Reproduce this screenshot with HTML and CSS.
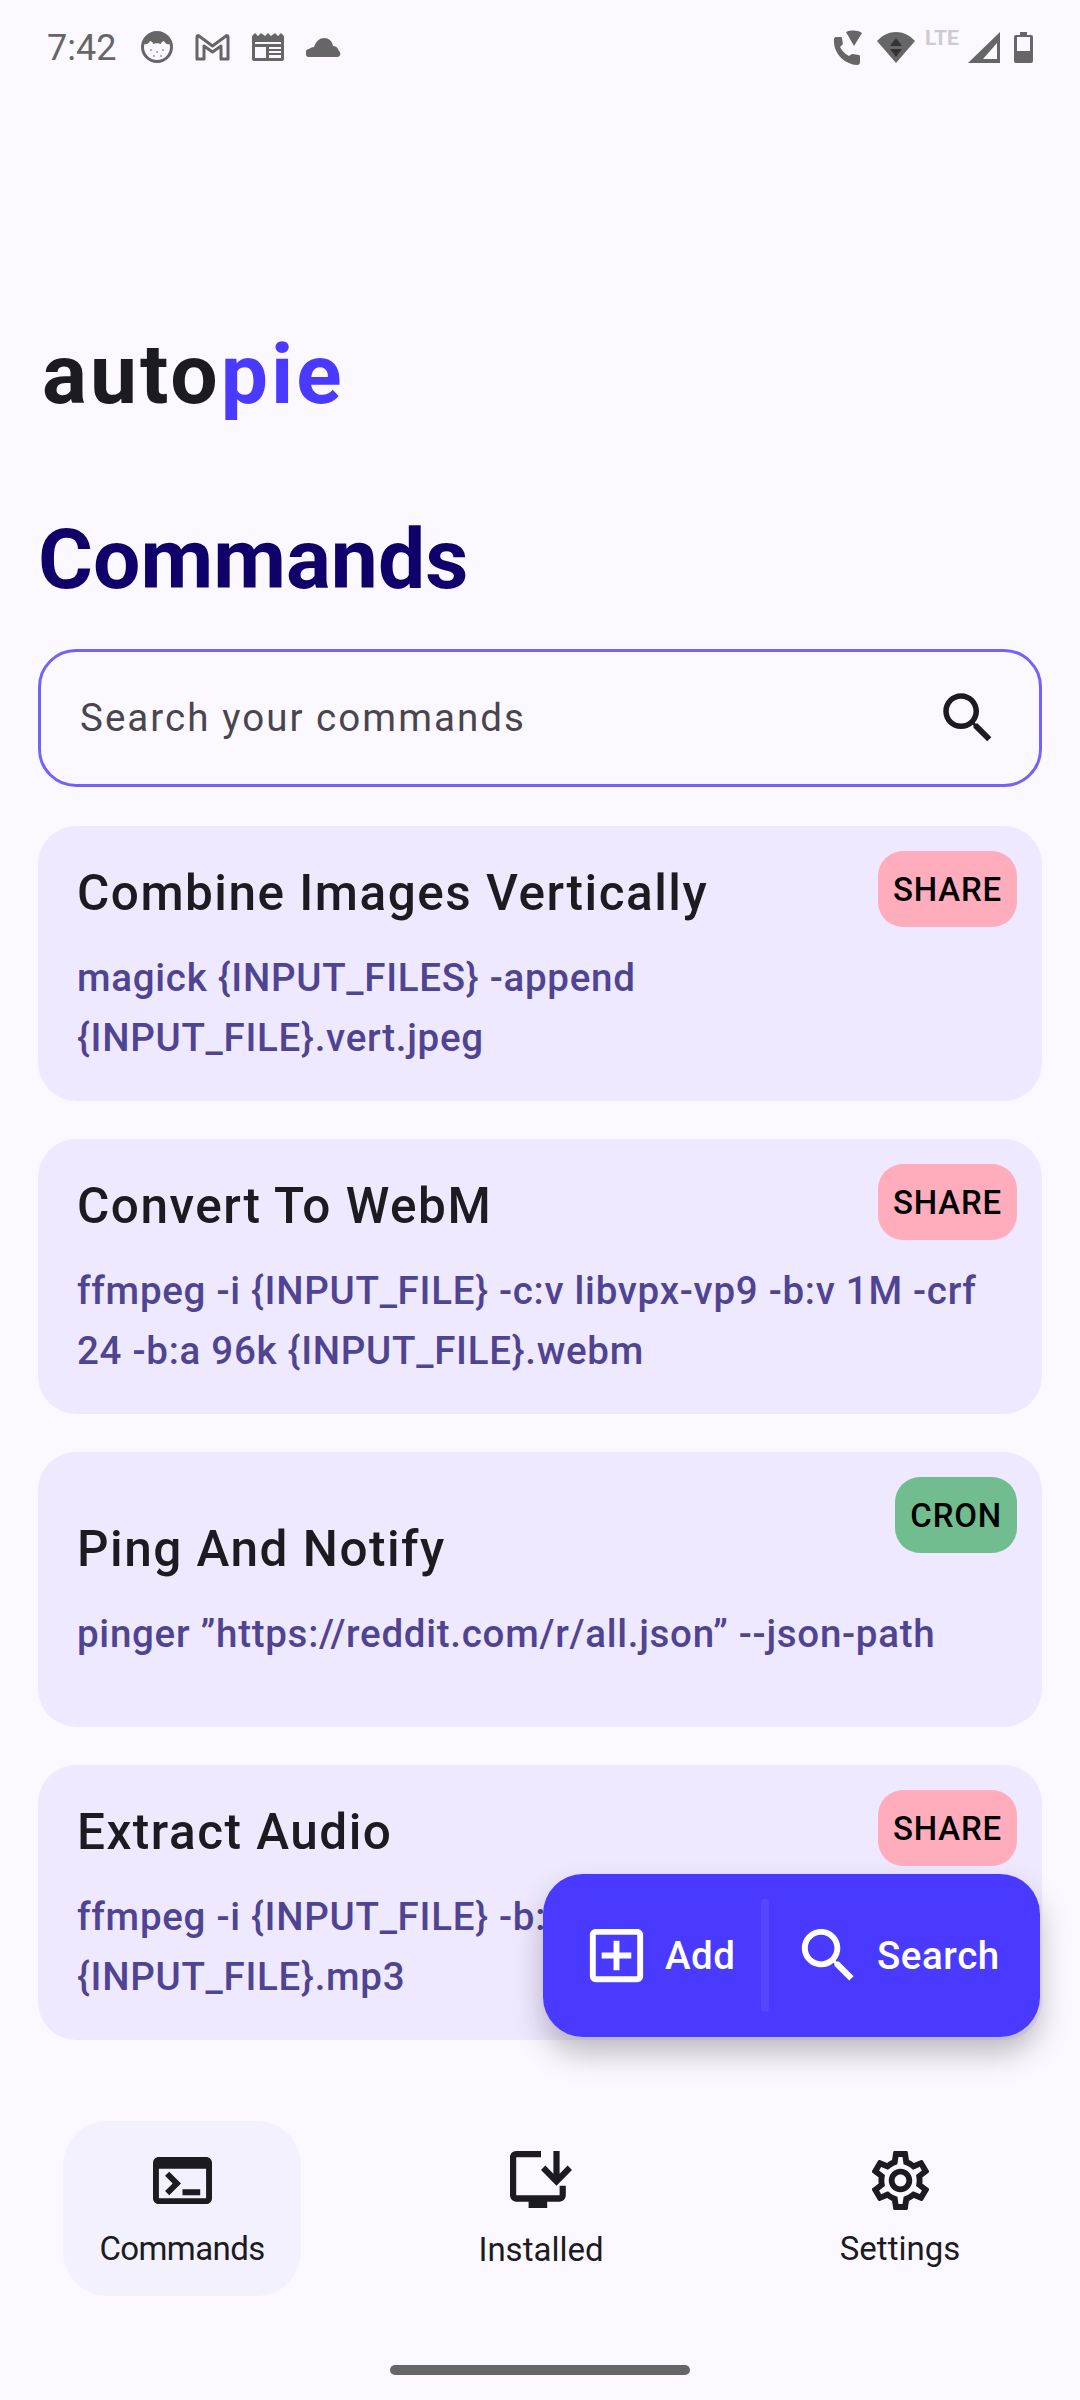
FILE: index.html
```html
<!DOCTYPE html>
<html lang="en">
<head>
  <meta charset="UTF-8">
  <title>autopie</title>
  <link rel="stylesheet" href="styles.css">
</head>
<body>
  <div class="page">

    <!-- Status bar -->
    <div class="status-bar">
      <span class="clock">7:42</span>
      <div class="status-left">
        <svg class="st-face" viewBox="0 0 32 32"><circle cx="16" cy="16" r="14.5" fill="none" stroke="#666" stroke-width="3"/><path d="M3 13C4 6 10 2 16 2s12 4 13 11c-3 1-5-1-6-3-2 1-3 1-3 3-2-1-6-1-8 0 0-2-1-2-3-3-1 2-3 4-6 3z" fill="#666"/><g fill="#999"><circle cx="10" cy="19" r="1"/><circle cx="16" cy="21" r="1"/><circle cx="22" cy="19" r="1"/><circle cx="13" cy="25" r="1"/><circle cx="20" cy="25" r="1"/></g></svg>
        <svg class="st-mail" viewBox="0 0 35 28"><path d="M2 26V4c0-1 1-2 2-1l13.500 10L31 3c1-1 2 0 2 1v22h-7V13l-8.500 6L9 13v13z" fill="none" stroke="#666" stroke-width="3" stroke-linejoin="round"/></svg>
        <svg class="st-news" viewBox="0 0 32 28"><path d="M0 3l3-3 3 3 3-3 4 3 3-3 3 3 4-3 3 3 3-3 3 3v23a2 2 0 0 1-2 2H2a2 2 0 0 1-2-2z" fill="#666"/><path d="M3 9h26v2H3zM3 14h11v11H3zM17 14h12v2H17zM17 18h12v2H17zM17 22h12v3H17z" fill="#fbf8ff"/></svg>
        <svg class="st-cloud" viewBox="0 0 35 20"><path d="M4 20a4 4 0 0 1-1-8c1-1 3-2 5-2 2-6 6-9 10-9 5 0 8 3 9 8 4 0 5 3 6 5 2 1 2 6-2 6z" fill="#666"/></svg>
      </div>
      <div class="status-right">
        <svg class="st-call" viewBox="0 0 29 35"><path d="M13 2c5-2 11-2 16 1l-8 13z" fill="#666"/><path d="M1 9c0-1 1-2 2-2h5c1 0 1 1 1 2l1 5-3 3c2 4 5 7 9 9l3-2 7 1c1 0 1 1 1 2v5c0 2-1 3-3 3C10 34 0 22 1 9z" fill="#666"/></svg>
        <svg class="st-wifi" viewBox="0 0 38 31"><path d="M0 9c11-12 27-12 38 0L19 31z" fill="#666"/><path d="M19 6l6 8H13zM19 25l-6-8h12z" fill="#333"/></svg>
        <span class="st-lte">LTE</span>
        <svg class="st-signal" viewBox="0 0 32 31"><path d="M32 0v31H0z" fill="#666"/><path d="M29 11v16H15z" fill="#fbf8ff"/></svg>
        <svg class="st-battery" viewBox="0 0 19 31"><path d="M6 0h7v3h4a2 2 0 0 1 2 2v24a2 2 0 0 1-2 2H2a2 2 0 0 1-2-2V5a2 2 0 0 1 2-2h4z" fill="#666"/><path d="M3 5h13v14H3z" fill="#fbf8ff"/></svg>
      </div>
    </div>

    <!-- Main content -->
    <div class="brand">auto<span class="brand-accent">pie</span></div>
    <h1 class="title">Commands</h1>

    <div class="search-box">
      <span class="search-hint">Search your commands</span>
      <svg class="icon search-icon" viewBox="0 0 24 24"><path d="M15.500 14h-.79l-.28-.27C15.410 12.590 16 11.110 16 9.500 16 5.910 13.090 3 9.500 3S3 5.910 3 9.500 5.910 16 9.500 16c1.610 0 3.090-.59 4.230-1.570l.27.28v.79l5 4.990L20.490 19l-4.990-5zm-6 0C7.010 14 5 11.990 5 9.500S7.010 5 9.500 5 14 7.010 14 9.500 11.990 14 9.500 14z"/></svg>
    </div>

    <div class="card-list">
      <div class="card">
        <span class="badge badge-share">SHARE</span>
        <div class="card-title">Combine Images Vertically</div>
        <div class="card-cmd">magick {INPUT_FILES} -append {INPUT_FILE}.vert.jpeg</div>
      </div>
      <div class="card">
        <span class="badge badge-share">SHARE</span>
        <div class="card-title">Convert To WebM</div>
        <div class="card-cmd">ffmpeg -i {INPUT_FILE} -c:v libvpx-vp9 -b:v 1M -crf 24 -b:a 96k {INPUT_FILE}.webm</div>
      </div>
      <div class="card">
        <span class="badge badge-cron">CRON</span>
        <div class="card-title">Ping And Notify</div>
        <div class="card-cmd">pinger ”https://reddit.com/r/all.json” --json-path</div>
      </div>
      <div class="card">
        <span class="badge badge-share">SHARE</span>
        <div class="card-title">Extract Audio</div>
        <div class="card-cmd">ffmpeg -i {INPUT_FILE} -b:a 192K -vn -f mp3 {INPUT_FILE}.mp3</div>
      </div>
    </div>

    <!-- Floating add / search button -->
    <div class="fab">
      <div class="fab-part fab-add">
        <svg class="icon" viewBox="0 0 24 24"><path d="M19 3H5c-1.100 0-2 .9-2 2v14c0 1.100.9 2 2 2h14c1.100 0 2-.9 2-2V5c0-1.100-.9-2-2-2zm0 16H5V5h14v14zM11 17h2v-4h4v-2h-4V7h-2v4H7v2h4z"/></svg>
        <span>Add</span>
      </div>
      <div class="fab-divider"></div>
      <div class="fab-part fab-search">
        <svg class="icon" viewBox="0 0 24 24"><path d="M15.500 14h-.79l-.28-.27C15.410 12.590 16 11.110 16 9.500 16 5.910 13.090 3 9.500 3S3 5.910 3 9.500 5.910 16 9.500 16c1.610 0 3.090-.59 4.230-1.570l.27.28v.79l5 4.990L20.490 19l-4.990-5zm-6 0C7.010 14 5 11.990 5 9.500S7.010 5 9.500 5 14 7.010 14 9.500 11.990 14 9.500 14z"/></svg>
        <span>Search</span>
      </div>
    </div>

    <!-- Bottom navigation -->
    <div class="bottom-nav">
      <div class="nav-item nav-item-active">
        <svg class="nav-icon nav-icon-terminal" viewBox="2 4 20 16" preserveAspectRatio="none"><path d="M20 4H4c-1.100 0-2 .9-2 2v12c0 1.100.9 2 2 2h16c1.100 0 2-.9 2-2V6c0-1.100-.9-2-2-2zm0 14H4V8h16v10zm-2-1h-6v-2h6v2zM7.500 17l-1.410-1.410L8.670 13l-2.590-2.590L7.500 9l4 4-4 4z"/></svg>
        <span>Commands</span>
      </div>
      <div class="nav-item">
        <svg class="nav-icon nav-icon-install" viewBox="3 3 20 18" preserveAspectRatio="none"><path d="M19 17H5V5h8V3H5C3.900 3 3 3.890 3 5v12c0 1.100.89 2 2 2h4v2h6v-2h4c1.100 0 2-.9 2-2v-3h-2v3zM18 14l5-5-1.410-1.410L19 10.170V3h-2v7.170l-2.590-2.580L13 9l5 5z"/></svg>
        <span>Installed</span>
      </div>
      <div class="nav-item">
        <svg class="nav-icon nav-icon-gear" viewBox="2.300 2 19.400 20" preserveAspectRatio="none"><path d="M19.430 12.980c.04-.32.07-.64.07-.98 0-.34-.03-.66-.07-.98l2.110-1.650c.19-.15.24-.42.12-.64l-2-3.460c-.09-.16-.26-.25-.44-.25-.06 0-.12.01-.17.03l-2.490 1c-.52-.4-1.080-.73-1.690-.98l-.38-2.650C14.460 2.180 14.250 2 14 2h-4c-.25 0-.46.18-.49.42l-.38 2.650c-.61.25-1.170.59-1.690.98l-2.490-1c-.06-.02-.12-.03-.18-.03-.17 0-.34.09-.43.25l-2 3.460c-.13.22-.07.49.12.64l2.110 1.650c-.04.32-.07.65-.07.98 0 .33.03.66.07.98l-2.110 1.650c-.19.15-.24.42-.12.64l2 3.460c.09.16.26.25.44.25.06 0 .12-.01.17-.03l2.490-1c.52.4 1.080.73 1.690.98l.38 2.650c.03.24.24.42.49.42h4c.25 0 .46-.18.49-.42l.38-2.650c.61-.25 1.170-.59 1.690-.98l2.490 1c.06.02.12.03.18.03.17 0 .34-.09.43-.25l2-3.460c.12-.22.07-.49-.12-.64l-2.110-1.650zm-1.980-1.710c.04.31.05.52.05.73 0 .21-.02.43-.05.73l-.14 1.130.89.7 1.080.84-.7 1.210-1.270-.51-1.040-.42-.9.68c-.43.32-.84.56-1.250.73l-1.060.43-.16 1.130-.2 1.350h-1.400l-.19-1.350-.16-1.130-1.060-.43c-.43-.18-.83-.41-1.230-.71l-.91-.7-1.060.43-1.270.51-.7-1.210 1.080-.84.89-.7-.14-1.130c-.03-.31-.05-.54-.05-.74s.02-.43.05-.73l.14-1.130-.89-.7-1.080-.84.7-1.210 1.270.51 1.040.42.9-.68c.43-.32.84-.56 1.250-.73l1.060-.43.16-1.130.2-1.350h1.390l.19 1.350.16 1.130 1.060.43c.43.18.83.41 1.230.71l.91.7 1.060-.43 1.270-.51.7 1.210-1.070.85-.89.7.14 1.130zM12 8c-2.210 0-4 1.790-4 4s1.790 4 4 4 4-1.790 4-4-1.790-4-4-4zm0 6c-1.100 0-2-.9-2-2s.9-2 2-2 2 .9 2 2-.9 2-2 2z"/></svg>
        <span>Settings</span>
      </div>
    </div>

    <div class="home-bar"></div>
  </div>
</body>
</html>
```

FILE: styles.css
```css
html, body {
  margin: 0;
  padding: 0;
  background: #fbf8ff;
  font-family: 'Roboto', sans-serif;
  color: #1c1b1f;
}

.page {
  position: relative;
  width: 1080px;
  height: 2400px;
  overflow: hidden;
  display: flex;
  flex-direction: column;
}

/* Status bar */
.status-bar {
  height: 62px;
  padding: 0 47px;
  display: flex;
  align-items: center;
  margin-top: 16px;
  color: #666;
  box-sizing: border-box;
}

.clock {
  font-size: 36px;
  width: 94px;
  padding-top: 2px;
}

.status-left {
  display: flex;
  align-items: center;
  gap: 22px;
}

.status-right {
  display: flex;
  align-items: center;
  margin-left: auto;
}

.st-face { width: 32px; height: 32px; }
.st-mail { width: 35px; height: 28px; }
.st-news { width: 32px; height: 28px; }
.st-cloud { width: 35px; height: 20px; }
.st-call { width: 29px; height: 35px; }
.st-wifi { width: 38px; height: 31px; margin-left: 15px; }
.st-signal { width: 32px; height: 31px; margin-left: 5px; }
.st-battery { width: 19px; height: 31px; margin-left: 14px; }

.st-lte {
  font-size: 21px;
  font-weight: 700;
  color: #ccc;
  width: 38px;
  margin-left: 10px;
  margin-bottom: 18px;
}

/* Header */
.brand {
  margin: 247px 0 0 42px;
  font-size: 84px;
  line-height: 100px;
  font-weight: 700;
  letter-spacing: 3px;
}

.brand-accent {
  color: #4a3aff;
}

.title {
  margin: 85px 0 0 38px;
  font-size: 84px;
  line-height: 100px;
  font-weight: 700;
  color: #10006a;
}

/* Search */
.search-box {
  margin: 39px 38px 0;
  height: 138px;
  padding: 0 38px 0 39px;
  display: flex;
  align-items: center;
  justify-content: space-between;
  border: 3px solid #7462f8;
  border-radius: 38px;
  box-sizing: border-box;
}

.search-hint {
  font-size: 38.500px;
  letter-spacing: 2.050px;
  color: #49454f;
  margin-top: -2px;
}

.icon {
  width: 71px;
  height: 71px;
  fill: #fff;
  flex-shrink: 0;
}

.search-icon {
  fill: #1c1b1f;
  width: 66px;
  height: 66px;
}

/* Cards */
.card-list {
  margin: 39px 38px 0;
  display: flex;
  flex-direction: column;
  gap: 38px;
}

.card {
  position: relative;
  height: 275px;
  padding: 0 39px;
  display: flex;
  flex-direction: column;
  justify-content: center;
  background: #efe9ff;
  border-radius: 38px;
  box-sizing: border-box;
}

.card-title {
  font-size: 49.500px;
  line-height: 66px;
  font-weight: 500;
  letter-spacing: 1.500px;
  margin-bottom: 22px;
}

.card-cmd {
  font-size: 38.500px;
  line-height: 60px;
  font-weight: 500;
  letter-spacing: 0.720px;
  color: #4f4491;
}

.badge {
  position: absolute;
  top: 25px;
  right: 25px;
  height: 76px;
  padding: 0 15px;
  display: flex;
  align-items: center;
  border-radius: 25px;
  font-size: 33px;
  font-weight: 500;
  letter-spacing: 0.800px;
  color: #000;
}

.badge-share {
  background: #ffadbd;
}

.badge-cron {
  background: #72bd8f;
}

/* Floating button */
.fab {
  position: absolute;
  left: 543px;
  top: 1874px;
  width: 497px;
  height: 163px;
  display: flex;
  align-items: center;
  background: #4a3aff;
  border-radius: 40px;
  box-shadow: 0 16px 30px rgba(0, 0, 0, 0.25);
  color: #fff;
  font-size: 38.500px;
  font-weight: 500;
  letter-spacing: 0.550px;
}

.fab-part {
  display: flex;
  align-items: center;
  gap: 13px;
}

.fab-add {
  width: 218px;
  padding-left: 38px;
  box-sizing: border-box;
}

.fab-search {
  padding-left: 24px;
}

.fab-divider {
  width: 8px;
  height: 113px;
  border-radius: 4px;
  background: #5546ff;
}

/* Bottom nav */
.bottom-nav {
  margin-top: 81px;
  padding-left: 63px;
  display: grid;
  grid-template-columns: repeat(3, 238px);
  column-gap: 121px;
}

.nav-item {
  height: 175px;
  display: flex;
  flex-direction: column;
  align-items: center;
  font-size: 33px;
  line-height: 40px;
}

.nav-item-active {
  background: #f3f1fe;
  border-radius: 44px;
  letter-spacing: -0.600px;
}

.nav-icon {
  fill: #1c1b1f;
  margin-top: 36px;
  margin-bottom: 25px;
}

.nav-icon-terminal { width: 59px; height: 47px; }
.nav-icon-install { width: 62px; height: 57px; margin-top: 30px; margin-bottom: 22px; }
.nav-icon-gear { width: 57px; height: 59px; margin-top: 30px; margin-bottom: 19px; }

.home-bar {
  width: 300px;
  height: 10px;
  margin: 69px auto 0;
  border-radius: 5px;
  background: #666;
}
```
